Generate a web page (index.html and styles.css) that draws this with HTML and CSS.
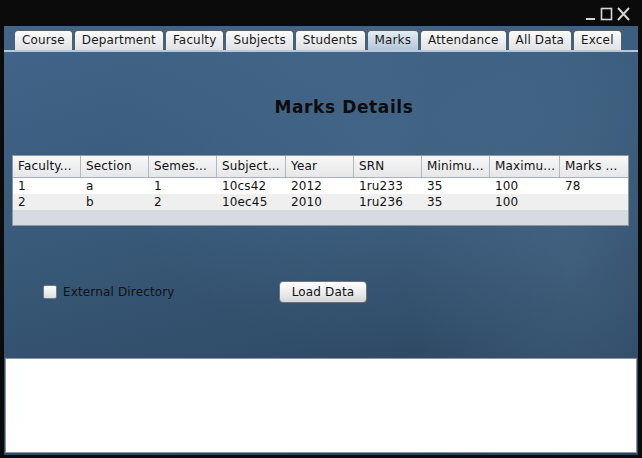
FILE: index.html
```html
<!DOCTYPE html>
<html>
<head>
<meta charset="utf-8">
<link rel="stylesheet" href="styles.css">
</head>
<body>
<div class="titlebar">
  <svg class="winctl" width="50" height="16" viewBox="0 0 50 16">
    <rect x="2" y="12" width="9" height="2" fill="#d6d6d6"/>
    <rect x="17.5" y="2.5" width="10" height="11" fill="none" stroke="#d6d6d6" stroke-width="1.6"/>
    <path d="M34 2 L45 14 M45 2 L34 14" stroke="#d6d6d6" stroke-width="2"/>
  </svg>
</div>
<div class="frame">
  <div class="tabs">
    <div class="tab">Course</div>
    <div class="tab">Department</div>
    <div class="tab">Faculty</div>
    <div class="tab">Subjects</div>
    <div class="tab">Students</div>
    <div class="tab active">Marks</div>
    <div class="tab">Attendance</div>
    <div class="tab">All Data</div>
    <div class="tab">Excel</div>
  </div>
  <div class="pane">
    <h1 class="heading">Marks Details</h1>
    <div class="table">
      <div class="row head">
        <div class="cell">Faculty...</div><div class="cell">Section</div><div class="cell">Semes...</div><div class="cell">Subject...</div><div class="cell">Year</div><div class="cell">SRN</div><div class="cell">Minimu...</div><div class="cell">Maximu...</div><div class="cell">Marks ...</div>
      </div>
      <div class="row r1">
        <div class="cell">1</div><div class="cell">a</div><div class="cell">1</div><div class="cell">10cs42</div><div class="cell">2012</div><div class="cell">1ru233</div><div class="cell">35</div><div class="cell">100</div><div class="cell">78</div>
      </div>
      <div class="row r2">
        <div class="cell">2</div><div class="cell">b</div><div class="cell">2</div><div class="cell">10ec45</div><div class="cell">2010</div><div class="cell">1ru236</div><div class="cell">35</div><div class="cell">100</div><div class="cell"></div>
      </div>
      <div class="empty"></div>
    </div>
    <div class="options">
      <label class="check"><span class="box"></span>External Directory</label>
      <button class="btn">Load Data</button>
    </div>
  </div>
  <div class="output"></div>
</div>
</body>
</html>
```
FILE: styles.css
```css
html, body {
  margin: 0;
  padding: 0;
  background: #0b0b0b;
  font-family: "DejaVu Sans", sans-serif;
  font-size: 12px;
  color: #111;
}
.titlebar {
  height: 26px;
  display: flex;
  justify-content: flex-end;
  align-items: flex-start;
  padding-right: 8px;
  box-sizing: border-box;
}
.winctl {
  margin-top: 6px;
}
.frame {
  margin: 0 4px;
  height: 429px;
  display: flex;
  flex-direction: column;
  background:
    radial-gradient(ellipse 240px 420px at 90% 55%, rgba(110,150,185,0.22), rgba(110,150,185,0) 70%),
    radial-gradient(ellipse 360px 280px at 60% 28%, rgba(95,135,175,0.24), rgba(95,135,175,0) 75%),
    linear-gradient(165deg, #42658a 0%, #385978 40%, #2e4964 75%, #283f57 100%);
}
.tabs {
  display: flex;
  gap: 1px;
  padding: 4px 0 0 10px;
  height: 20px;
  border-bottom: 2px solid #b6c9da;
}
.tab {
  height: 20px;
  box-sizing: border-box;
  padding: 0 7px;
  line-height: 19px;
  letter-spacing: 0.15px;
  border: 1px solid #4e5f70;
  border-bottom: none;
  border-radius: 4px 4px 0 0;
  background: linear-gradient(#fbfbfb, #dfe1e4);
  color: #1a1a1a;
  white-space: nowrap;
}
.tab.active {
  background: linear-gradient(#e6edf3, #b3c6d8);
}
.pane {
  height: 298px;
  display: flex;
  flex-direction: column;
}
.heading {
  margin: 45px 0 0 0;
  text-align: center;
  font-size: 17px;
  line-height: 20px;
  letter-spacing: 0.6px;
  font-weight: bold;
  color: #0c0c0c;
  padding-left: 46px;
}
.table {
  margin: 38px 9px 0 8px;
  border: 1px solid #8c97a2;
  background: #d6dbe1;
}
.row {
  display: grid;
  grid-template-columns: 68px 68px 68px 69px 68px 68px 68px 70px 68px;
}
.row.head {
  height: 21px;
  background: linear-gradient(#f7f7f7, #e6e7e9);
  border-bottom: 1px solid #a9b0b7;
}
.row.head .cell {
  line-height: 21px;
  border-right: 1px solid #b2b8be;
}
.row.head .cell:last-child {
  border-right: none;
}
.row.r1 { height: 16px; background: #ffffff; }
.row.r2 { height: 16px; background: #efefef; }
.cell {
  padding-left: 5px;
  line-height: 16px;
  letter-spacing: 0.15px;
  white-space: nowrap;
  overflow: hidden;
}
.empty {
  height: 15px;
}
.options {
  display: flex;
  align-items: center;
  margin-top: 55px;
  padding-left: 39px;
}
.check {
  display: flex;
  align-items: center;
  gap: 6px;
  width: 236px;
  color: #111;
  letter-spacing: 0.15px;
}
.box {
  width: 12px;
  height: 12px;
  border: 1px solid #6e7a86;
  border-radius: 2px;
  background: linear-gradient(#ffffff, #dadde0);
}
.btn {
  width: 88px;
  height: 22px;
  font-family: "DejaVu Sans", sans-serif;
  font-size: 12px;
  letter-spacing: 0.15px;
  color: #111;
  border: 1px solid #6c737a;
  border-radius: 4px;
  background: linear-gradient(#ffffff, #e9e9e9 60%, #d4d6d8);
  padding: 0;
}
.output {
  margin: 8px 1px 0 1px;
  height: 95px;
  box-sizing: border-box;
  border: 1px solid #8896a6;
  background: #ffffff;
}
```
